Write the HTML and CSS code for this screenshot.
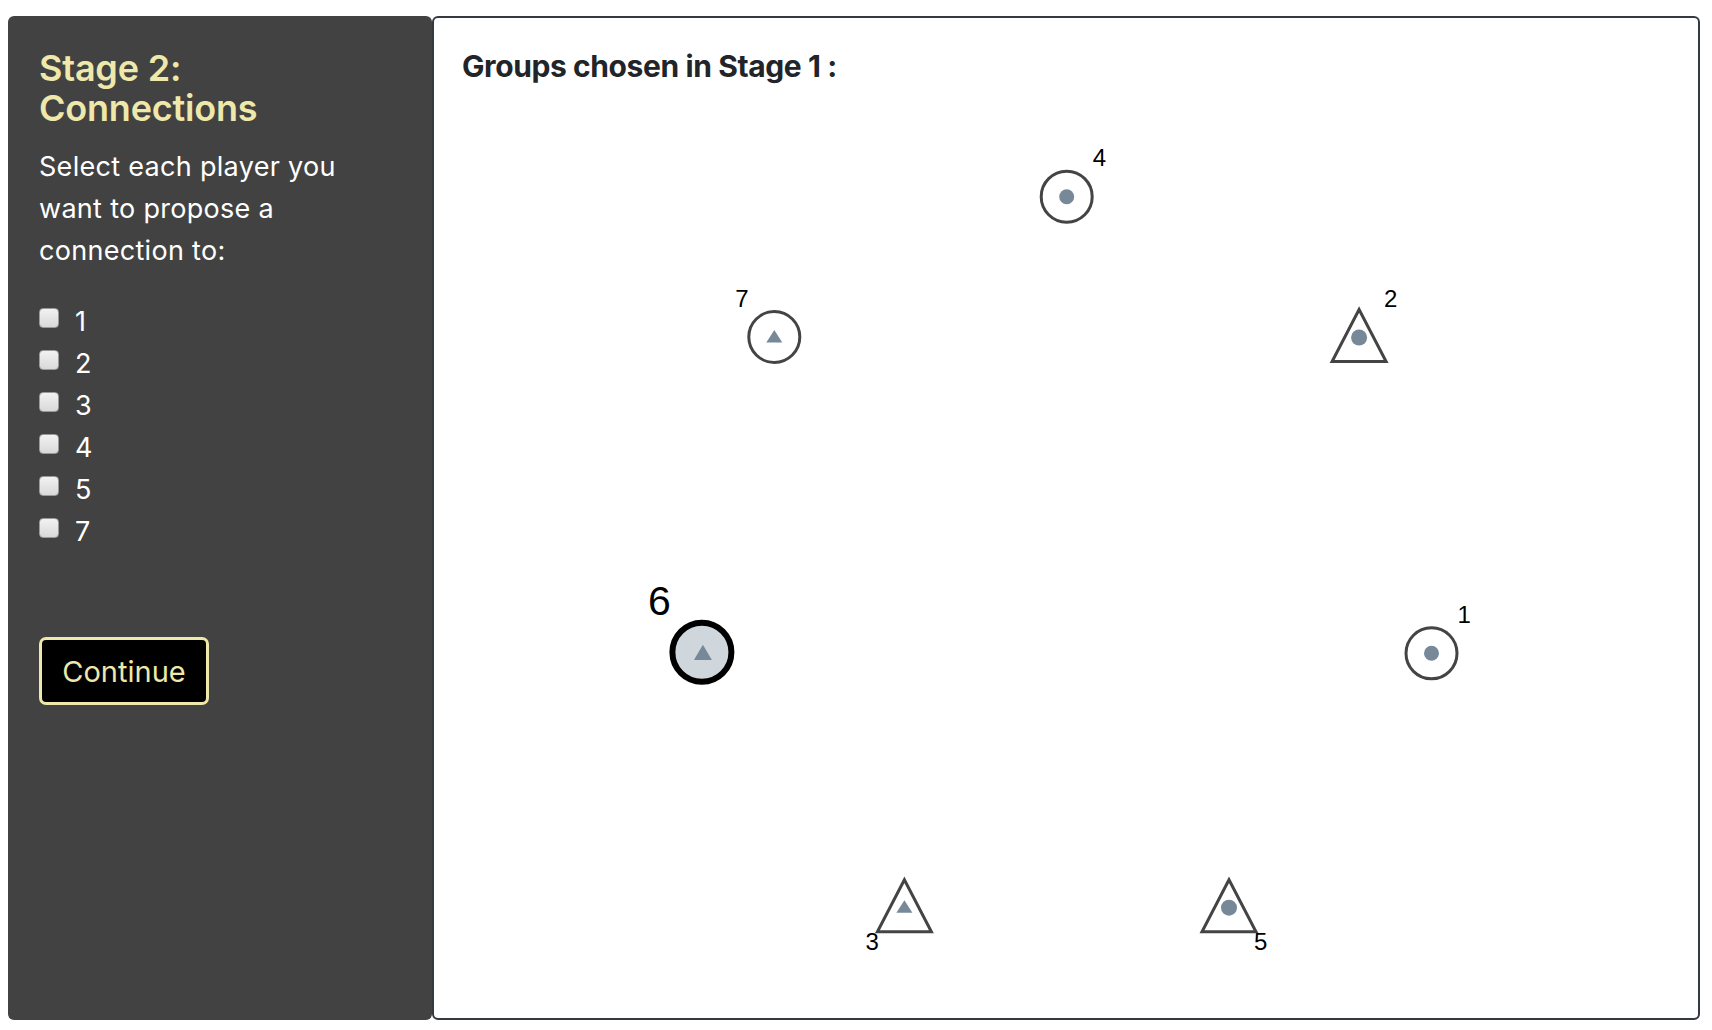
FILE: index.html
```html
<!DOCTYPE html>
<html lang="en">
<head>
<meta charset="utf-8">
<title>Stage 2: Connections</title>
<link rel="stylesheet" href="styles.css">
</head>
<body>
<div class="page">
  <aside class="sidebar">
    <h2 class="title">Stage 2:<br>Connections</h2>
    <p class="prompt">Select each player you want to propose a connection to:</p>
    <ul class="choices">
      <li><label><input type="checkbox" class="cb"><span>1</span></label></li>
      <li><label><input type="checkbox" class="cb"><span>2</span></label></li>
      <li><label><input type="checkbox" class="cb"><span>3</span></label></li>
      <li><label><input type="checkbox" class="cb"><span>4</span></label></li>
      <li><label><input type="checkbox" class="cb"><span>5</span></label></li>
      <li><label><input type="checkbox" class="cb"><span>7</span></label></li>
    </ul>
    <button class="continue" type="button">Continue</button>
  </aside>
  <main class="board">
    <h3 class="board-title">Groups chosen in Stage 1 :</h3>
    <svg class="graph" viewBox="0 0 1264 900" width="1264" height="900">
      <!-- node 4 -->
      <circle class="node" cx="632.7" cy="96.7" r="25.5"/>
      <circle class="mark" cx="632.7" cy="96.7" r="7.5"/>
      <text class="lbl" x="658.7" y="66.2">4</text>
      <!-- node 2 -->
      <polygon class="node" points="925.1,209.5 898.1,261.5 952.1,261.5"/>
      <circle class="mark" cx="925.1" cy="237.5" r="8"/>
      <text class="lbl" x="950.1" y="207">2</text>
      <!-- node 1 -->
      <circle class="node" cx="997.5" cy="553.3" r="25.5"/>
      <circle class="mark" cx="997.5" cy="553.3" r="7.5"/>
      <text class="lbl" x="1023.5" y="523.3">1</text>
      <!-- node 5 -->
      <polygon class="node" points="795,779.7 768,831.7 822,831.7"/>
      <circle class="mark" cx="795" cy="807.7" r="8"/>
      <text class="lbl" x="820" y="850">5</text>
      <!-- node 3 -->
      <polygon class="node" points="470.4,779.7 443.4,831.7 497.4,831.7"/>
      <polygon class="mark" points="470.4,800.2 462.4,812.7 478.4,812.7"/>
      <text class="lbl" x="431.4" y="850">3</text>
      <!-- node 6 (self) -->
      <circle class="self" cx="267.9" cy="552.3" r="29.5"/>
      <polygon class="mark" points="268.9,544.8 259.9,560 277.9,560"/>
      <text class="lbl big" x="214" y="514.5">6</text>
      <!-- node 7 -->
      <circle class="node" cx="340.3" cy="237" r="25.5"/>
      <polygon class="mark" points="340.3,230 332.3,242.5 348.3,242.5"/>
      <text class="lbl" x="301.3" y="207">7</text>
    </svg>
  </main>
</div>
</body>
</html>
```

FILE: styles.css
```css
* { box-sizing: border-box; }

html, body {
  margin: 0;
  padding: 0;
  background: #ffffff;
}

body {
  font-family: Inter, "Noto Sans", "Liberation Sans", sans-serif;
  color: #212529;
}

.page {
  display: flex;
  height: 1030px;
  padding: 16px 12px 10px 8px;
}

.sidebar {
  width: 424px;
  flex: 0 0 424px;
  background: #424242;
  border-radius: 6px;
  padding: 32px 20px 0 31px;
  color: #ffffff;
}

.title {
  margin: 0;
  font-size: 36px;
  line-height: 40px;
  font-weight: 600;
  color: #eee8aa;
  letter-spacing: -0.2px;
}

.prompt {
  margin: 18px 0 0 0;
  max-width: 335px;
  font-size: 27px;
  line-height: 42px;
  font-weight: 400;
  letter-spacing: 0.3px;
}

.choices {
  list-style: none;
  margin: 29px 0 0 0;
  padding: 0;
}

.choices li {
  height: 42px;
}

.choices label {
  display: flex;
  align-items: flex-start;
  font-size: 27px;
  line-height: 42px;
}

.cb {
  appearance: none;
  -webkit-appearance: none;
  width: 20px;
  height: 20px;
  margin: 7px 16px 0 0;
  border: 1px solid #9a9a9a;
  border-radius: 4px;
  background: linear-gradient(#f2f2f2, #d9d9d9);
  flex: 0 0 auto;
}

.continue {
  margin-top: 84px;
  width: 170px;
  height: 68px;
  background: #000000;
  border: 3px solid #eee8aa;
  border-radius: 7px;
  color: #eee8aa;
  font-family: Inter, "Noto Sans", "Liberation Sans", sans-serif;
  font-size: 29px;
  font-weight: 400;
  padding: 0;
}

.board {
  flex: 1 1 auto;
  border: 2px solid #343a40;
  border-radius: 6px;
  background: #ffffff;
  display: flex;
  flex-direction: column;
}

.board-title {
  margin: 30px 0 0 28px;
  font-size: 30px;
  line-height: 36px;
  font-weight: 700;
  color: #212529;
  letter-spacing: -0.4px;
}

.graph {
  display: block;
  margin-top: 16px;
}

.node {
  fill: #ffffff;
  stroke: #444444;
  stroke-width: 3;
}

.self {
  fill: #d0d7dc;
  stroke: #000000;
  stroke-width: 6;
}

.mark {
  fill: #778899;
}

.lbl {
  font-family: "Liberation Sans", Arial, sans-serif;
  font-size: 24px;
  fill: #000000;
}

.lbl.big {
  font-size: 41px;
}
```
